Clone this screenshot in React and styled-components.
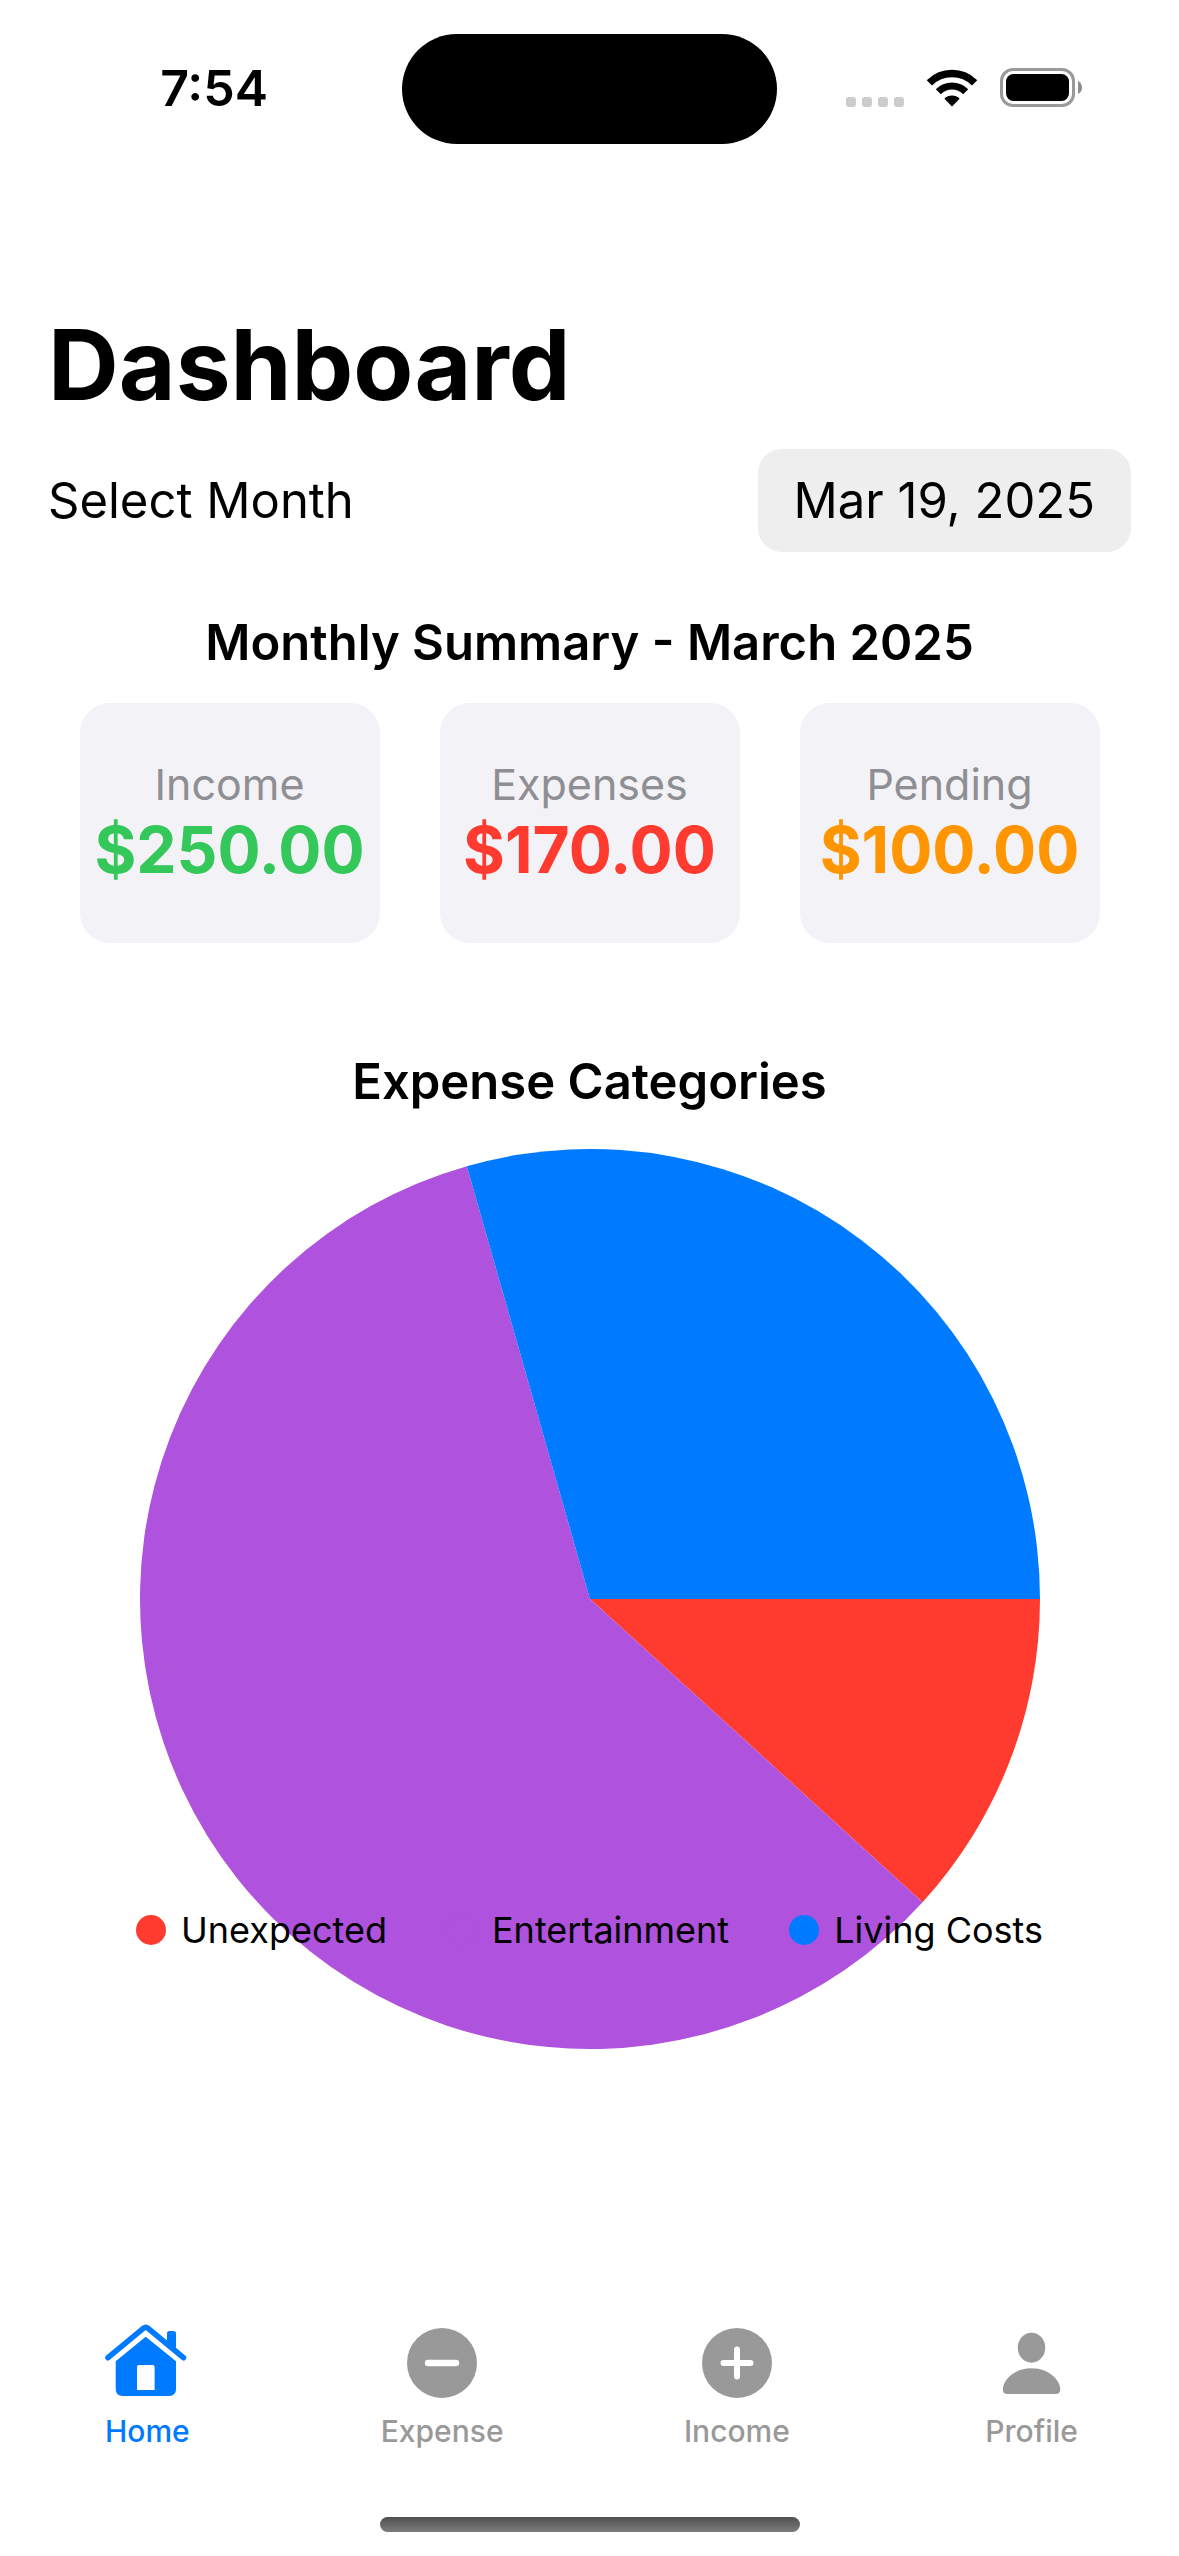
import React from "react";
import styled, { createGlobalStyle } from "styled-components";

const GlobalStyle = createGlobalStyle`
  *, *::before, *::after { box-sizing: border-box; }
  body {
    margin: 0;
    background: #ffffff;
    color: #000000;
    font-family: Inter, "Liberation Sans", sans-serif;
  }
  h1, h2, p, ul, dl, dd, figure { margin: 0; padding: 0; }
`;

const Screen = styled.div`
  display: flex;
  flex-direction: column;
  min-height: 100vh;
`;

const StatusBar = styled.header`
  display: grid;
  grid-template-columns: 1fr 375px 1fr;
  align-items: center;
  padding-top: 34px;
`;

const Clock = styled.time`
  justify-self: end;
  padding: 0 134px 2px 0;
  font-size: 50px;
  line-height: 60px;
  font-weight: 600;
`;

const Island = styled.div`
  height: 110px;
  border-radius: 55px;
  background: #000000;
`;

const StatusIcons = styled.div`
  display: flex;
  align-items: center;
  gap: 23px;
  padding: 0 0 2px 69px;
`;

const Main = styled.main`
  display: flex;
  flex-direction: column;
  padding: 161px 48px 0;
`;

const PageTitle = styled.h1`
  font-size: 98px;
  line-height: 120px;
  font-weight: 700;
`;

const MonthRow = styled.div`
  display: flex;
  align-items: center;
  justify-content: space-between;
  margin-top: 24px;
`;

const MonthLabel = styled.label`
  font-size: 49px;
  line-height: 60px;
`;

const DateButton = styled.button`
  height: 103px;
  padding: 0 36px;
  border: 0;
  border-radius: 24px;
  background: #eeeeef;
  color: inherit;
  font: inherit;
  font-size: 49px;
  line-height: 60px;
`;

const Section = styled.section`
  display: flex;
  flex-direction: column;
  align-items: center;
  margin-top: ${({ $space }) => $space}px;
`;

const SectionTitle = styled.h2`
  font-size: 49px;
  line-height: 60px;
  font-weight: 600;
  text-align: center;
`;

const Cards = styled.dl`
  display: grid;
  grid-template-columns: repeat(3, minmax(0, 300px));
  justify-content: center;
  gap: 60px;
  width: 100%;
  margin-top: 30px;
`;

const Card = styled.div`
  display: flex;
  flex-direction: column;
  align-items: center;
  padding: 54px 0;
  border-radius: 30px;
  background: #f2f2f7;
`;

const CardLabel = styled.dt`
  color: #8e8e93;
  font-size: 43px;
  line-height: 54px;
`;

const CardValue = styled.dd`
  color: ${({ $color }) => $color};
  font-size: 64px;
  line-height: 78px;
  font-weight: 700;
`;

const ChartFigure = styled.figure`
  display: grid;
  justify-items: center;
  width: 100%;
  margin-top: 37px;

  > * { grid-area: 1 / 1; }
`;

const PieSvg = styled.svg`
  display: block;
  width: 100%;
  max-width: 900px;
`;

const Legend = styled.ul`
  display: flex;
  align-self: end;
  gap: 60px;
  padding-bottom: 97px;
  list-style: none;
`;

const LegendItem = styled.li`
  display: flex;
  align-items: center;
  gap: 15px;
  font-size: 36px;
  line-height: 44px;
  white-space: nowrap;
`;

const Swatch = styled.span`
  width: 30px;
  height: 30px;
  border-radius: 50%;
  background: ${({ $color }) => $color};
`;

const TabBar = styled.nav`
  display: grid;
  grid-template-columns: repeat(4, 1fr);
  margin-top: auto;
  padding-bottom: 68px;
`;

const Tab = styled.a`
  display: flex;
  flex-direction: column;
  align-items: center;
  gap: 8px;
  color: ${({ $active }) => ($active ? "#007aff" : "#999999")};
  font-size: 30px;
  line-height: 36px;
  font-weight: 500;
  text-decoration: none;
`;

const HomeIndicator = styled.div`
  align-self: center;
  width: 420px;
  height: 15px;
  margin-bottom: 24px;
  border-radius: 8px;
  background: linear-gradient(#505050, #7c7c7c);
`;

const SUMMARY = [
  { label: "Income", value: "$250.00", color: "#34c759" },
  { label: "Expenses", value: "$170.00", color: "#ff3b30" },
  { label: "Pending", value: "$100.00", color: "#ff9500" },
];

const CATEGORIES = [
  { name: "Unexpected", amount: 20, color: "#ff3b30" },
  { name: "Entertainment", amount: 100, color: "#af52de" },
  { name: "Living Costs", amount: 50, color: "#007aff" },
];

function PieChart({ data }) {
  const r = 450;
  const total = data.reduce((sum, d) => sum + d.amount, 0);
  const point = (v) => {
    const a = (v / total) * 2 * Math.PI;
    return `${r + r * Math.cos(a)} ${r + r * Math.sin(a)}`;
  };
  let start = 0;
  return (
    <PieSvg viewBox="0 0 900 900" role="img" aria-label="Expense categories">
      {data.map((d) => {
        const end = start + d.amount;
        const large = d.amount / total > 0.5 ? 1 : 0;
        const path = `M${r} ${r} L${point(start)} A${r} ${r} 0 ${large} 1 ${point(end)} Z`;
        start = end;
        return <path key={d.name} d={path} fill={d.color} />;
      })}
    </PieSvg>
  );
}

function SignalIcon() {
  return (
    <svg width="58" height="38" viewBox="0 0 58 38" fill="#cccccc" aria-hidden="true">
      {[0, 16, 32, 48].map((x) => (
        <rect key={x} x={x} y="28" width="10" height="10" rx="3" />
      ))}
    </svg>
  );
}

function WifiIcon() {
  return (
    <svg width="50" height="38" viewBox="0 0 50 38" fill="none" stroke="#000000" aria-hidden="true">
      <path d="M2.4 13.8A32 32 0 0 1 47.6 13.8" strokeWidth="7.4" />
      <path d="M11.3 22.8A19.3 19.3 0 0 1 38.7 22.8" strokeWidth="7" />
      <path d="M25 37.6L17.4 29.8A10.6 10.6 0 0 1 32.6 29.8Z" fill="#000000" stroke="none" />
    </svg>
  );
}

function BatteryIcon() {
  return (
    <svg width="82" height="40" viewBox="0 0 82 40" aria-hidden="true">
      <rect x="1.5" y="1.5" width="72" height="36" rx="11.5" fill="none" stroke="#999999" strokeWidth="3" />
      <rect x="6" y="6" width="63" height="27" rx="7.5" fill="#000000" />
      <path d="M78 13Q82 15 82 19.5T78 26Z" fill="#8c8c8c" />
    </svg>
  );
}

function TabIcon({ children }) {
  return (
    <svg width="84" height="84" viewBox="0 0 84 84" fill="currentColor" aria-hidden="true">
      {children}
    </svg>
  );
}

const TABS = [
  {
    name: "Home",
    icon: (
      <>
        <path d="M3 36.7L38.6 7.2Q40.7 5.4 42.8 7.2L78.4 36.7" fill="none" stroke="currentColor" strokeWidth="5.6" strokeLinecap="round" strokeLinejoin="round" />
        <path d="M62 20V12.5Q62 10 64.5 10H68.5Q71 10 71 12.5V29L62 22Z" />
        <path fillRule="evenodd" d="M40.7 15.8L71 40.3V68Q71 75 64 75H17.7Q10.7 75 10.7 68V40.3ZM34 44Q32 44 32 46V69H49.6V46Q49.6 44 47.6 44Z" />
      </>
    ),
  },
  {
    name: "Expense",
    icon: (
      <>
        <circle cx="42" cy="42" r="35" />
        <path d="M28 42H56" stroke="#ffffff" strokeWidth="6.4" strokeLinecap="round" />
      </>
    ),
  },
  {
    name: "Income",
    icon: (
      <>
        <circle cx="42" cy="42" r="35" />
        <path d="M28.5 42H55.5M42 28.5V55.5" stroke="#ffffff" strokeWidth="6" strokeLinecap="round" />
      </>
    ),
  },
  {
    name: "Profile",
    icon: (
      <>
        <ellipse cx="41.5" cy="26.7" rx="13.7" ry="15" />
        <path d="M17.5 73Q12.8 73 12.8 68.5C12.8 60 23 47.3 41.5 47.3S70.2 60 70.2 68.5Q70.2 73 65.5 73Z" />
      </>
    ),
  },
];

export default function App() {
  return (
    <Screen>
      <GlobalStyle />
      <StatusBar>
        <Clock>7:54</Clock>
        <Island />
        <StatusIcons>
          <SignalIcon />
          <WifiIcon />
          <BatteryIcon />
        </StatusIcons>
      </StatusBar>

      <Main>
        <PageTitle>Dashboard</PageTitle>
        <MonthRow>
          <MonthLabel htmlFor="month">Select Month</MonthLabel>
          <DateButton id="month" type="button">Mar 19, 2025</DateButton>
        </MonthRow>

        <Section $space={61}>
          <SectionTitle>Monthly Summary - March 2025</SectionTitle>
          <Cards>
            {SUMMARY.map((item) => (
              <Card key={item.label}>
                <CardLabel>{item.label}</CardLabel>
                <CardValue $color={item.color}>{item.value}</CardValue>
              </Card>
            ))}
          </Cards>
        </Section>

        <Section $space={109}>
          <SectionTitle>Expense Categories</SectionTitle>
          <ChartFigure>
            <PieChart data={CATEGORIES} />
            <Legend>
              {CATEGORIES.map((c) => (
                <LegendItem key={c.name}>
                  <Swatch $color={c.color} />
                  {c.name}
                </LegendItem>
              ))}
            </Legend>
          </ChartFigure>
        </Section>
      </Main>

      <TabBar>
        {TABS.map((tab, i) => (
          <Tab key={tab.name} href={`#${tab.name.toLowerCase()}`} $active={i === 0}>
            <TabIcon>{tab.icon}</TabIcon>
            {tab.name}
          </Tab>
        ))}
      </TabBar>
      <HomeIndicator />
    </Screen>
  );
}
